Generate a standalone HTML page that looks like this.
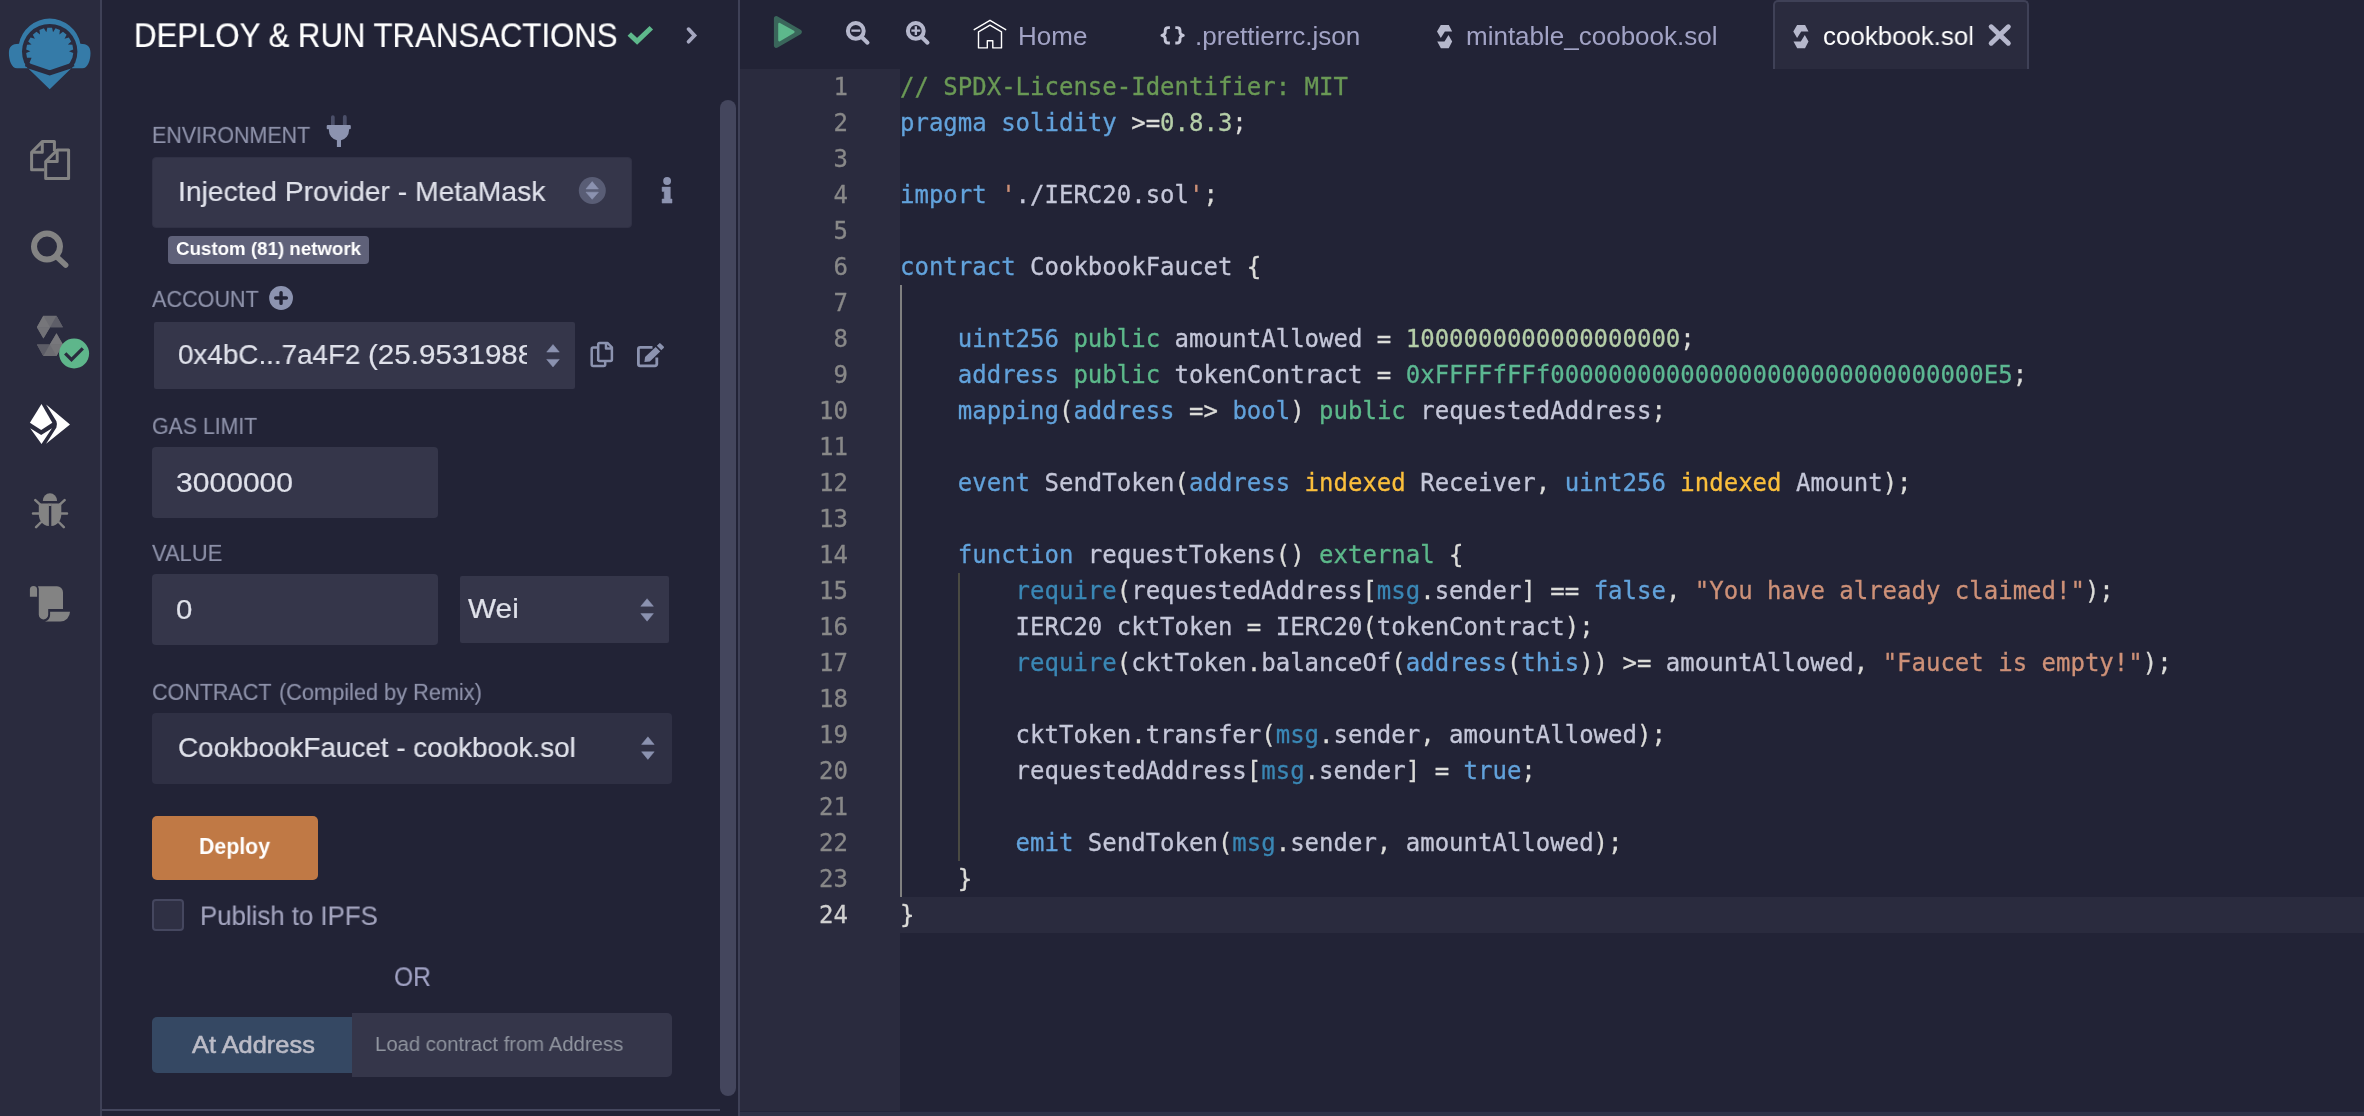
<!DOCTYPE html>
<html lang="en"><head><meta charset="utf-8"><title>Remix - Deploy &amp; Run Transactions</title>
<style>
html,body{margin:0;padding:0;}
body{width:2364px;height:1116px;overflow:hidden;background:#222336;position:relative;font-family:"Liberation Sans",sans-serif;}
.code{will-change:transform;position:absolute;left:0;top:0;font:24px/36px "DejaVu Sans Mono","Liberation Mono",monospace;color:#c5c7d9;white-space:pre;-webkit-text-stroke:0.3px currentColor;}
.code span{-webkit-text-stroke:0.3px currentColor;}
.ln{will-change:transform;position:absolute;font:24px/36px "DejaVu Sans Mono","Liberation Mono",monospace;color:#888888;text-align:right;white-space:pre;-webkit-text-stroke:0.3px currentColor;}
.p{color:#dcdcd9}.k{color:#62a2db}.c{color:#6a9955}.n{color:#b5cea8}.g{color:#5cb88a}.y{color:#fbbf3c}.r{color:#3a87b5}.s{color:#ce9178}.h{color:#5cb892}
</style></head><body>
<div style="position:absolute;left:0px;top:0px;width:100px;height:1116px;background:#2a2b3e;"></div>
<div style="position:absolute;left:100px;top:0px;width:2px;height:1116px;background:#3f4157;"></div>
<div style="position:absolute;left:738px;top:0px;width:2px;height:1116px;background:#3f4157;"></div>
<div style="position:absolute;left:720px;top:100px;width:16px;height:996px;background:#44465d;border-radius:8px;"></div>
<div style="position:absolute;left:102px;top:1109px;width:618px;height:2px;background:#44465d;"></div>
<div style="position:absolute;left:740px;top:69px;width:160px;height:1042px;background:#2a2b3e;"></div>
<div style="position:absolute;left:900px;top:897px;width:1464px;height:36px;background:#2a2b3e;"></div>
<div style="position:absolute;left:740px;top:1111px;width:1624px;height:1px;background:#23243a;"></div>
<div style="position:absolute;left:740px;top:1112px;width:1624px;height:4px;background:#2e3146;"></div>
<div style="position:absolute;left:1773px;top:0px;width:256px;height:69px;background:#2a2b3e;box-sizing:border-box;border:2px solid #3f4157;border-bottom:none;border-radius:5px 5px 0 0;"></div>
<div style="position:absolute;left:134px;top:13.00px;font:normal 34.5px/45px 'Liberation Sans', sans-serif;color:#ffffff;white-space:nowrap;will-change:transform;transform-origin:0 34px;transform:scale(0.903,0.985);-webkit-text-stroke:0.2px #ffffff;">DEPLOY &amp; RUN TRANSACTIONS</div>
<div style="position:absolute;left:152px;top:120.00px;font:normal 23.5px/31px 'Liberation Sans', sans-serif;color:#8f93ab;white-space:nowrap;will-change:transform;transform-origin:0 23px;transform:scale(0.911,0.95);-webkit-text-stroke:0.15px #8f93ab;">ENVIRONMENT</div>
<div style="position:absolute;left:152px;top:157px;width:480px;height:71px;background:#35364a;border-radius:4px;box-sizing:border-box;border:1px solid #303145;"></div>
<div style="position:absolute;left:178px;top:173.00px;font:normal 28.5px/37px 'Liberation Sans', sans-serif;color:#dfe1ea;white-space:nowrap;will-change:transform;transform-origin:0 28px;transform:scale(0.991,1.0);-webkit-text-stroke:0.2px #dfe1ea;">Injected Provider - MetaMask</div>
<div style="position:absolute;left:168px;top:236px;width:201px;height:28px;background:#5f6179;border-radius:4px;"></div>
<div style="position:absolute;left:176px;top:236.00px;font:bold 19px/25px 'Liberation Sans', sans-serif;color:#ffffff;white-space:nowrap;will-change:transform;transform-origin:0 19px;transform:scale(0.985,1.0);">Custom (81) network</div>
<div style="position:absolute;left:152px;top:284.00px;font:normal 23.5px/31px 'Liberation Sans', sans-serif;color:#8f93ab;white-space:nowrap;will-change:transform;transform-origin:0 23px;transform:scale(0.919,0.95);-webkit-text-stroke:0.15px #8f93ab;">ACCOUNT</div>
<div style="position:absolute;left:154px;top:322px;width:421px;height:67px;background:#35364a;border-radius:2px;"></div>
<div style="position:absolute;left:177.6px;top:336.00px;font:normal 28.5px/37px 'Liberation Sans', sans-serif;color:#dfe1ea;white-space:nowrap;will-change:transform;transform-origin:0 28px;transform:scale(0.976,1.0);-webkit-text-stroke:0.2px #dfe1ea;">0x4bC...7a4F2</div>
<div style="position:absolute;left:368.2px;top:336.00px;font:normal 28.5px/37px 'Liberation Sans', sans-serif;color:#dfe1ea;white-space:nowrap;will-change:transform;transform-origin:0 28px;transform:scale(1.039,1.0);-webkit-text-stroke:0.2px #dfe1ea;width:153.1px;overflow:hidden;">(25.95319888</div>
<div style="position:absolute;left:152px;top:411.00px;font:normal 23.5px/31px 'Liberation Sans', sans-serif;color:#8f93ab;white-space:nowrap;will-change:transform;transform-origin:0 23px;transform:scale(0.906,0.95);-webkit-text-stroke:0.15px #8f93ab;">GAS LIMIT</div>
<div style="position:absolute;left:152px;top:447px;width:286px;height:71px;background:#35364a;border-radius:4px;"></div>
<div style="position:absolute;left:176px;top:464.00px;font:normal 28.5px/37px 'Liberation Sans', sans-serif;color:#dfe1ea;white-space:nowrap;will-change:transform;transform-origin:0 28px;transform:scale(1.055,1.0);-webkit-text-stroke:0.2px #dfe1ea;">3000000</div>
<div style="position:absolute;left:152px;top:538.00px;font:normal 23.5px/31px 'Liberation Sans', sans-serif;color:#8f93ab;white-space:nowrap;will-change:transform;transform-origin:0 23px;transform:scale(0.932,0.95);-webkit-text-stroke:0.15px #8f93ab;">VALUE</div>
<div style="position:absolute;left:152px;top:574px;width:286px;height:71px;background:#35364a;border-radius:4px;"></div>
<div style="position:absolute;left:176px;top:591.00px;font:normal 28.5px/37px 'Liberation Sans', sans-serif;color:#dfe1ea;white-space:nowrap;will-change:transform;transform-origin:0 28px;transform:scale(1.03,1.0);-webkit-text-stroke:0.2px #dfe1ea;">0</div>
<div style="position:absolute;left:460px;top:576px;width:209px;height:67px;background:#35364a;border-radius:2px;"></div>
<div style="position:absolute;left:468px;top:590.00px;font:normal 28.5px/37px 'Liberation Sans', sans-serif;color:#dfe1ea;white-space:nowrap;will-change:transform;transform-origin:0 28px;transform:scale(1.045,1.0);-webkit-text-stroke:0.2px #dfe1ea;">Wei</div>
<div style="position:absolute;left:152px;top:677.00px;font:normal 23.5px/31px 'Liberation Sans', sans-serif;color:#8f93ab;white-space:nowrap;will-change:transform;transform-origin:0 23px;transform:scale(0.915,0.95);-webkit-text-stroke:0.15px #8f93ab;">CONTRACT</div>
<div style="position:absolute;left:279px;top:677.00px;font:normal 23.5px/31px 'Liberation Sans', sans-serif;color:#8f93ab;white-space:nowrap;will-change:transform;transform-origin:0 23px;transform:scale(0.925,0.95);-webkit-text-stroke:0.15px #8f93ab;">(Compiled by Remix)</div>
<div style="position:absolute;left:152px;top:713px;width:520px;height:71px;background:#2f3044;border-radius:4px;"></div>
<div style="position:absolute;left:178px;top:729.00px;font:normal 28.5px/37px 'Liberation Sans', sans-serif;color:#dfe1ea;white-space:nowrap;will-change:transform;transform-origin:0 28px;transform:scale(0.977,1.0);-webkit-text-stroke:0.2px #dfe1ea;">CookbookFaucet - cookbook.sol</div>
<div style="position:absolute;left:152px;top:816px;width:166px;height:64px;background:#c07945;border-radius:5px;"></div>
<div style="position:absolute;left:199px;top:831.00px;font:bold 23px/30px 'Liberation Sans', sans-serif;color:#ffffff;white-space:nowrap;will-change:transform;transform-origin:0 23px;transform:scale(0.926,0.94);">Deploy</div>
<div style="position:absolute;left:152px;top:899px;width:32px;height:32px;background:#2f3044;box-sizing:border-box;border:2px solid #45475f;border-radius:4px;"></div>
<div style="position:absolute;left:200px;top:899.00px;font:normal 27px/35px 'Liberation Sans', sans-serif;color:#a2a3bd;white-space:nowrap;will-change:transform;transform-origin:0 26px;transform:scale(0.956,0.975);-webkit-text-stroke:0.15px #a2a3bd;">Publish to IPFS</div>
<div style="position:absolute;left:393.5px;top:960.00px;font:normal 27px/35px 'Liberation Sans', sans-serif;color:#a2a3c5;white-space:nowrap;will-change:transform;transform-origin:0 26px;transform:scale(0.91,0.985);-webkit-text-stroke:0.15px #a2a3c5;">OR</div>
<div style="position:absolute;left:152px;top:1017px;width:200px;height:56px;background:#354863;border-radius:5px 0 0 5px;"></div>
<div style="position:absolute;left:191.5px;top:1029.00px;font:normal 24.5px/32px 'Liberation Sans', sans-serif;color:#bcbcc7;white-space:nowrap;will-change:transform;transform-origin:0 24px;transform:scale(1.037,1.0);-webkit-text-stroke:0.6px #bcbcc7;">At Address</div>
<div style="position:absolute;left:352px;top:1013px;width:320px;height:64px;background:#35364a;border-radius:0 5px 5px 0;"></div>
<div style="position:absolute;left:375px;top:1030.00px;font:normal 20.5px/27px 'Liberation Sans', sans-serif;color:#90959f;white-space:nowrap;will-change:transform;transform-origin:0 21px;transform:scale(0.99,1.0);">Load contract from Address</div>
<div style="position:absolute;left:1018px;top:19.00px;font:normal 26px/34px 'Liberation Sans', sans-serif;color:#a2a3c5;white-space:nowrap;will-change:transform;transform-origin:0 26px;">Home</div>
<div style="position:absolute;left:1195px;top:19.00px;font:normal 26px/34px 'Liberation Sans', sans-serif;color:#a2a3c5;white-space:nowrap;will-change:transform;transform-origin:0 26px;transform:scale(1.004,1.0);">.prettierrc.json</div>
<div style="position:absolute;left:1466px;top:19.00px;font:normal 26px/34px 'Liberation Sans', sans-serif;color:#a2a3c5;white-space:nowrap;will-change:transform;transform-origin:0 26px;transform:scale(0.999,1.0);">mintable_coobook.sol</div>
<div style="position:absolute;left:1823px;top:19.00px;font:normal 26px/34px 'Liberation Sans', sans-serif;color:#ffffff;white-space:nowrap;will-change:transform;transform-origin:0 26px;transform:scale(0.995,1.0);">cookbook.sol</div>
<div style="position:absolute;left:900px;top:285px;width:2px;height:612px;background:#808080;"></div>
<div style="position:absolute;left:958px;top:573px;width:2px;height:288px;background:#4a4a42;"></div>
<div class="code" style="left:900.3px;top:69px;"><span class="c">// SPDX-License-Identifier: MIT</span>
<span class="k">pragma</span> <span class="k">solidity</span> <span class="p">&gt;=</span><span class="n">0.8.3</span><span class="p">;</span>

<span class="k">import</span> <span class="s">&#x27;</span>./IERC20.sol<span class="s">&#x27;</span><span class="p">;</span>

<span class="k">contract</span> CookbookFaucet <span class="p">{</span>

    <span class="k">uint256</span> <span class="g">public</span> amountAllowed <span class="p">=</span> <span class="n">1000000000000000000</span><span class="p">;</span>
    <span class="k">address</span> <span class="g">public</span> tokenContract <span class="p">=</span> <span class="h">0xFFFFfFFf000000000000000000000000000000E5</span><span class="p">;</span>
    <span class="k">mapping</span><span class="p">(</span><span class="k">address</span> <span class="p">=&gt;</span> <span class="k">bool</span><span class="p">)</span> <span class="g">public</span> requestedAddress<span class="p">;</span>

    <span class="k">event</span> SendToken<span class="p">(</span><span class="k">address</span> <span class="y">indexed</span> Receiver<span class="p">,</span> <span class="k">uint256</span> <span class="y">indexed</span> Amount<span class="p">);</span>

    <span class="k">function</span> requestTokens<span class="p">()</span> <span class="g">external</span> <span class="p">{</span>
        <span class="r">require</span><span class="p">(</span>requestedAddress<span class="p">[</span><span class="r">msg</span><span class="p">.</span>sender<span class="p">]</span> <span class="p">==</span> <span class="k">false</span><span class="p">,</span> <span class="s">&quot;You have already claimed!&quot;</span><span class="p">);</span>
        IERC20 cktToken <span class="p">=</span> IERC20<span class="p">(</span>tokenContract<span class="p">);</span>
        <span class="r">require</span><span class="p">(</span>cktToken<span class="p">.</span>balanceOf<span class="p">(</span><span class="k">address</span><span class="p">(</span><span class="k">this</span><span class="p">))</span> <span class="p">&gt;=</span> amountAllowed<span class="p">,</span> <span class="s">&quot;Faucet is empty!&quot;</span><span class="p">);</span>

        cktToken<span class="p">.</span>transfer<span class="p">(</span><span class="r">msg</span><span class="p">.</span>sender<span class="p">,</span> amountAllowed<span class="p">);</span>
        requestedAddress<span class="p">[</span><span class="r">msg</span><span class="p">.</span>sender<span class="p">]</span> <span class="p">=</span> <span class="k">true</span><span class="p">;</span>

        <span class="k">emit</span> SendToken<span class="p">(</span><span class="r">msg</span><span class="p">.</span>sender<span class="p">,</span> amountAllowed<span class="p">);</span>
    <span class="p">}</span>
<span class="p">}</span></div>
<div class="ln" style="left:740px;top:69px;width:108px;">1
2
3
4
5
6
7
8
9
10
11
12
13
14
15
16
17
18
19
20
21
22
23
<span style="color:#d0d0d0">24</span></div>
<svg style="position:absolute;left:0;top:0;" width="2364" height="1116" viewBox="0 0 2364 1116"><path d="M26.5,68.3 L17,68.3 C11.5,68.3 8.9,60 8.9,53 C8.9,46.5 12,43.8 19,43.8 A31.3 31.3 0 0 1 80.4,43.8 C87.4,43.8 90.5,46.5 90.5,53 C90.5,60 87.9,68.3 82.4,68.3 L72.9,68.3 Z" fill="#357ba8" stroke="none" stroke-width="0" /><circle cx="49.7" cy="51.6" r="27.7" fill="#2a2b3e"/><clipPath id="gc"><path d="M0,0 H100 V64.2 H74 L49.7,72.4 L25.4,64.2 H0 Z"/></clipPath><path d="M46.35,32.19 L47.32,27.72 L52.08,27.72 L53.05,32.19 L55.49,28.32 L59.97,29.95 L59.35,34.49 L62.97,31.68 L66.62,34.75 L64.48,38.79 L68.84,37.39 L71.23,41.53 L67.84,44.60 L72.41,44.77 L73.24,49.47 L69.00,51.20 L73.24,52.93 L72.41,57.63 L71.59,59.17 L69.88,62.85 L67.55,66.18 L64.68,69.05 L61.35,71.38 L57.67,73.09 L53.75,74.15 L49.70,74.50 L45.65,74.15 L41.73,73.09 L38.05,71.38 L34.72,69.05 L31.85,66.18 L29.52,62.85 L31.56,57.80 L26.99,57.63 L26.16,52.93 L30.40,51.20 L26.16,49.47 L26.99,44.77 L31.56,44.60 L28.17,41.53 L30.56,37.39 L34.92,38.79 L32.78,34.75 L36.43,31.68 L40.05,34.49 L39.43,29.95 L43.91,28.32 Z" fill="#357ba8" stroke="none" stroke-width="0" clip-path="url(#gc)"/><path d="M25.6,64.2 L49.7,72.5 L73.8,64.2" fill="none" stroke="#2a2b3e" stroke-width="4.2" /><path d="M28.3,68.4 L49.7,75.6 L71.1,68.4 L49.7,89.3 Z" fill="#357ba8" stroke="none" stroke-width="0" /><path d="M44.2,169.8 H31.6 V152.3 L42.5,141.4 H54.4 V151 M42.3,141.4 V152.3 H31.6" fill="none" stroke="#838383" stroke-width="3" stroke-linejoin="round"/><path d="M45.7,161.5 L57.2,150 H68.6 V178.5 H45.7 Z M57.2,150 V161.5 H45.7" fill="none" stroke="#838383" stroke-width="3" stroke-linejoin="round"/><circle cx="47" cy="246.5" r="13" fill="none" stroke="#838383" stroke-width="6"/><path d="M57.2,257.2 L65.6,265" fill="none" stroke="#838383" stroke-width="5.6" stroke-linecap="round"/><path d="M43.3,315.8 H56.5 L62.9,327.2 H50.1 L43.4,338.5 L36.9,327.3 Z" fill="#6d6d73" stroke="none" stroke-width="0" /><path d="M36.9,327.3 L43.3,315.8 L50.1,327.2 Z" fill="#76767a" stroke="none" stroke-width="0" /><path d="M56.5,315.8 L62.9,327.2 H50.1 Z" fill="#5e5e68" stroke="none" stroke-width="0" /><path d="M36.9,327.3 H50.1 L43.4,338.5 Z" fill="#727277" stroke="none" stroke-width="0" /><path d="M56.5,333.3 L62.9,344.4 L56.5,355.9 H43.3 L36.9,344.4 H49.8 Z" fill="#6c6c72" stroke="none" stroke-width="0" /><path d="M36.9,344.4 H49.8 L43.3,355.9 Z" fill="#5c5c66" stroke="none" stroke-width="0" /><path d="M49.8,344.4 L56.5,333.3 L62.9,344.4 Z" fill="#78787c" stroke="none" stroke-width="0" /><path d="M49.8,344.4 H62.9 L56.5,355.9 Z" fill="#747478" stroke="none" stroke-width="0" /><circle cx="74.1" cy="353.5" r="15" fill="#5eb68b"/><path d="M65.2,353.4 L71.5,359.6 L82.8,348.4" fill="none" stroke="#2a2b3e" stroke-width="3.3" /><path d="M41.5,403.9 L29.9,422.7 L41.2,429.9 L52.3,422.7 Z" fill="#ffffff" stroke="none" stroke-width="0" /><path d="M30.2,428.3 L41.2,434.9 L52,428.3 L41.5,443.9 Z" fill="#ffffff" stroke="none" stroke-width="0" /><path d="M46.1,404.4 L70,424.5 L46.1,443.7 L56.4,427.6 Q57.6,424.4 56.4,421.2 Z" fill="#ffffff" stroke="none" stroke-width="0" /><path d="M42.8,500.9 A7.1 7.6 0 0 1 57.1,500.9 Z" fill="#838383" stroke="none" stroke-width="0" /><path d="M38.8,503.4 H48.9 V526.1 C42,525.5 38.8,520 38.8,514 Z" fill="#838383" stroke="none" stroke-width="0" /><path d="M61.3,503.4 H51.3 V526.1 C58,525.5 61.3,520 61.3,514 Z" fill="#838383" stroke="none" stroke-width="0" /><path d="M48.5,503.4 H51.6 V506 H48.5 Z" fill="#838383" stroke="none" stroke-width="0" /><path d="M35.3,500.2 L39.9,504.4 M64.6,500.2 L60,504.4 M33,513.4 H38.8 M61.4,513.4 H67 M36.1,527.2 L40.7,522.5 M63.8,527.2 L59.2,522.5" fill="none" stroke="#838383" stroke-width="2.5" stroke-linecap="round"/><path d="M29.9,596.8 V589.6 A3.6 3.6 0 0 1 37.1,589.6 V596.8 Z" fill="#838383" stroke="none" stroke-width="0" /><path d="M38,586.3 H57 A6 6 0 0 1 63,592.3 V608.9 H48.2 V614.8 A4.7 4.7 0 0 1 38.8,614.8 V588.8 Z" fill="#838383" stroke="none" stroke-width="0" /><path d="M50.1,611.8 H70 A9.7 9.7 0 0 1 60.3,621.5 H45 C48.5,620.5 50.1,618 50.1,614.8 Z" fill="#838383" stroke="none" stroke-width="0" /><path d="M629.3,34 L637.1,41.4 L651.3,27.7" fill="none" stroke="#5eb88c" stroke-width="5" /><path d="M688.5,29.1 L694.5,35.5 L688.5,41.7" fill="none" stroke="#a5a7c0" stroke-width="3.7" stroke-linecap="round"/><path d="M331,124.9 V117 A1.85 1.85 0 0 1 334.7,117 V124.9 Z M342.9,124.9 V117 A1.85 1.85 0 0 1 346.7,117 V124.9 Z" fill="#4b4f69" stroke="none" stroke-width="0" /><path d="M327.7,124.9 H349.8 A1 1 0 0 1 350.8,125.9 V128.2 A1 1 0 0 1 349.8,129.2 H349 V130.5 A10 10 0 0 1 341,140.3 V147.1 H336.9 V140.3 A10 10 0 0 1 328.9,130.5 V129.2 H327.7 A1 1 0 0 1 326.7,128.2 V125.9 A1 1 0 0 1 327.7,124.9 Z" fill="#8c93b0" stroke="none" stroke-width="0" /><circle cx="592.3" cy="190.5" r="13.5" fill="#595d75"/><path d="M592.2,181.6 L598.4,188.9 H586 Z M592.2,199.3 L598.4,192.2 H586 Z" fill="#8b92b0" stroke="#8b92b0" stroke-width="0.6" stroke-linejoin="round"/><circle cx="667.1" cy="181" r="3.9" fill="#8c93b0"/><path d="M662.1,187.1 H670.3 V199 H672 V203.1 H662.1 V199 H664.2 V191.4 H662.1 Z" fill="#8c93b0" stroke="#8c93b0" stroke-width="0.5" stroke-linejoin="round"/><circle cx="281.05" cy="298" r="11.9" fill="#8c93b0"/><path d="M275.7,298 H286.4 M281.05,292.6 V303.4" fill="none" stroke="#222336" stroke-width="3.4" stroke-linecap="round"/><path d="M553,344.5 L559.3,352.1 H546.7 Z M553,367.0 L559.3,359.4 H546.7 Z" fill="#8b92b0" stroke="#8b92b0" stroke-width="0.5" stroke-linejoin="round"/><path d="M647.1,598.7 L653.4,606.3000000000001 H640.8000000000001 Z M647.1,621.2 L653.4,613.6 H640.8000000000001 Z" fill="#8b92b0" stroke="#8b92b0" stroke-width="0.5" stroke-linejoin="round"/><path d="M647.9,736.8 L654.1999999999999,744.4 H641.6 Z M647.9,759.4 L654.1999999999999,751.8 H641.6 Z" fill="#8b92b0" stroke="#8b92b0" stroke-width="0.5" stroke-linejoin="round"/><path d="M598.2,361 V344.4 A1.5 1.5 0 0 1 599.7,342.9 H607.4 L611.9,347.4 V359.5 A1.5 1.5 0 0 1 610.4,361 H599.7 A1.5 1.5 0 0 1 598.2,359.5 M606,342.9 V348.6 H611.9" fill="none" stroke="#8c93b0" stroke-width="2.5" stroke-linejoin="round"/><path d="M597,347.6 H593.2 A1.5 1.5 0 0 0 591.7,349.1 V364.5 A1.5 1.5 0 0 0 593.2,366 H603.7 A1.5 1.5 0 0 0 605.2,364.5 V362" fill="none" stroke="#8c93b0" stroke-width="2.5" /><path d="M652.5,347.3 H640.2 A1.8 1.8 0 0 0 638.4,349.1 V364 A1.8 1.8 0 0 0 640.2,365.8 H655 A1.8 1.8 0 0 0 656.8,364 V357.5" fill="none" stroke="#8c93b0" stroke-width="2.8" /><path d="M655.7,347 L660.2,351.4 L649.9,361.5 L644.4,362.1 L645.1,356.9 Z" fill="#8c93b0" stroke="none" stroke-width="0" /><path d="M659.2,343.4 A0.9 0.9 0 0 1 660.5,343.4 L663.7,346.6 A0.9 0.9 0 0 1 663.7,347.9 L661.3,350.3 L656.8,345.8 Z" fill="#8c93b0" stroke="none" stroke-width="0" /><path d="M776.4,18.6 L799.3,32 L776.4,45.4 Z" fill="#3a665b" stroke="#3a665b" stroke-width="5" stroke-linejoin="round"/><path d="M779.4,24 L793.4,31.9 L779.4,40.2 Z" fill="#5db88c" stroke="#5db88c" stroke-width="2.4" stroke-linejoin="round"/><circle cx="855.8" cy="30.9" r="7.9" fill="none" stroke="#b5b7cc" stroke-width="4"/><path d="M862.1999999999999,37.5 L867.5,42.7" fill="none" stroke="#b5b7cc" stroke-width="4" stroke-linecap="round"/><path d="M851.4,30.65 H860.3" fill="none" stroke="#b5b7cc" stroke-width="2.3" /><circle cx="915.8" cy="30.9" r="7.9" fill="none" stroke="#b5b7cc" stroke-width="4"/><path d="M922.1999999999999,37.5 L927.5,42.7" fill="none" stroke="#b5b7cc" stroke-width="4" stroke-linecap="round"/><path d="M911.4,30.65 H920.3 M915.8499999999999,26.3 V35.1" fill="none" stroke="#b5b7cc" stroke-width="2.3" /><path d="M974.2,29.7 L990,20.3 L1005.7,29.7" fill="none" stroke="#ffffff" stroke-width="1.4" stroke-linecap="round" stroke-linejoin="round"/><path d="M990,25.1 L978.5,31.8 V47.9 H987.3 V40.7 H992.8 V47.9 H1001.5 V31.8 Z" fill="none" stroke="#ffffff" stroke-width="1.4" stroke-linejoin="round"/><path d="M1169.9,27.6 H1168.2 Q1165.2,27.6 1165.2,30.6 V32.2 Q1165.2,34.4 1161.9,35.3 Q1165.2,36.2 1165.2,38.4 V40 Q1165.2,43 1168.2,43 H1169.9" fill="none" stroke="#c5c6d8" stroke-width="2.9" stroke-linejoin="round"/><path d="M1175.3,27.6 H1177 Q1180,27.6 1180,30.6 V32.2 Q1180,34.4 1183.3,35.3 Q1180,36.2 1180,38.4 V40 Q1180,43 1177,43 H1175.3" fill="none" stroke="#c5c6d8" stroke-width="2.9" stroke-linejoin="round"/><path d="M1440.8,25 H1448.8 L1452.2,31.5 H1444.9 L1440.8,37.9 L1437,31.5 Z" fill="#b6b8cc" stroke="none" stroke-width="0" /><path d="M1448.5,35.1 L1452.2,41.5 L1448.7,48.2 H1440.9 L1437.2,41.5 H1444.5 Z" fill="#b6b8cc" stroke="none" stroke-width="0" /><path d="M1797.1,25 H1805.1 L1808.5,31.5 H1801.2 L1797.1,37.9 L1793.3,31.5 Z" fill="#b6b8cc" stroke="none" stroke-width="0" /><path d="M1804.8,35.1 L1808.5,41.5 L1805.0,48.2 H1797.2 L1793.5,41.5 H1800.8 Z" fill="#b6b8cc" stroke="none" stroke-width="0" /><path d="M1991.2,26.8 L2008.3,43.2 M2008.3,26.8 L1991.2,43.2" fill="none" stroke="#b5b7cc" stroke-width="5" stroke-linecap="round"/></svg>
</body></html>
